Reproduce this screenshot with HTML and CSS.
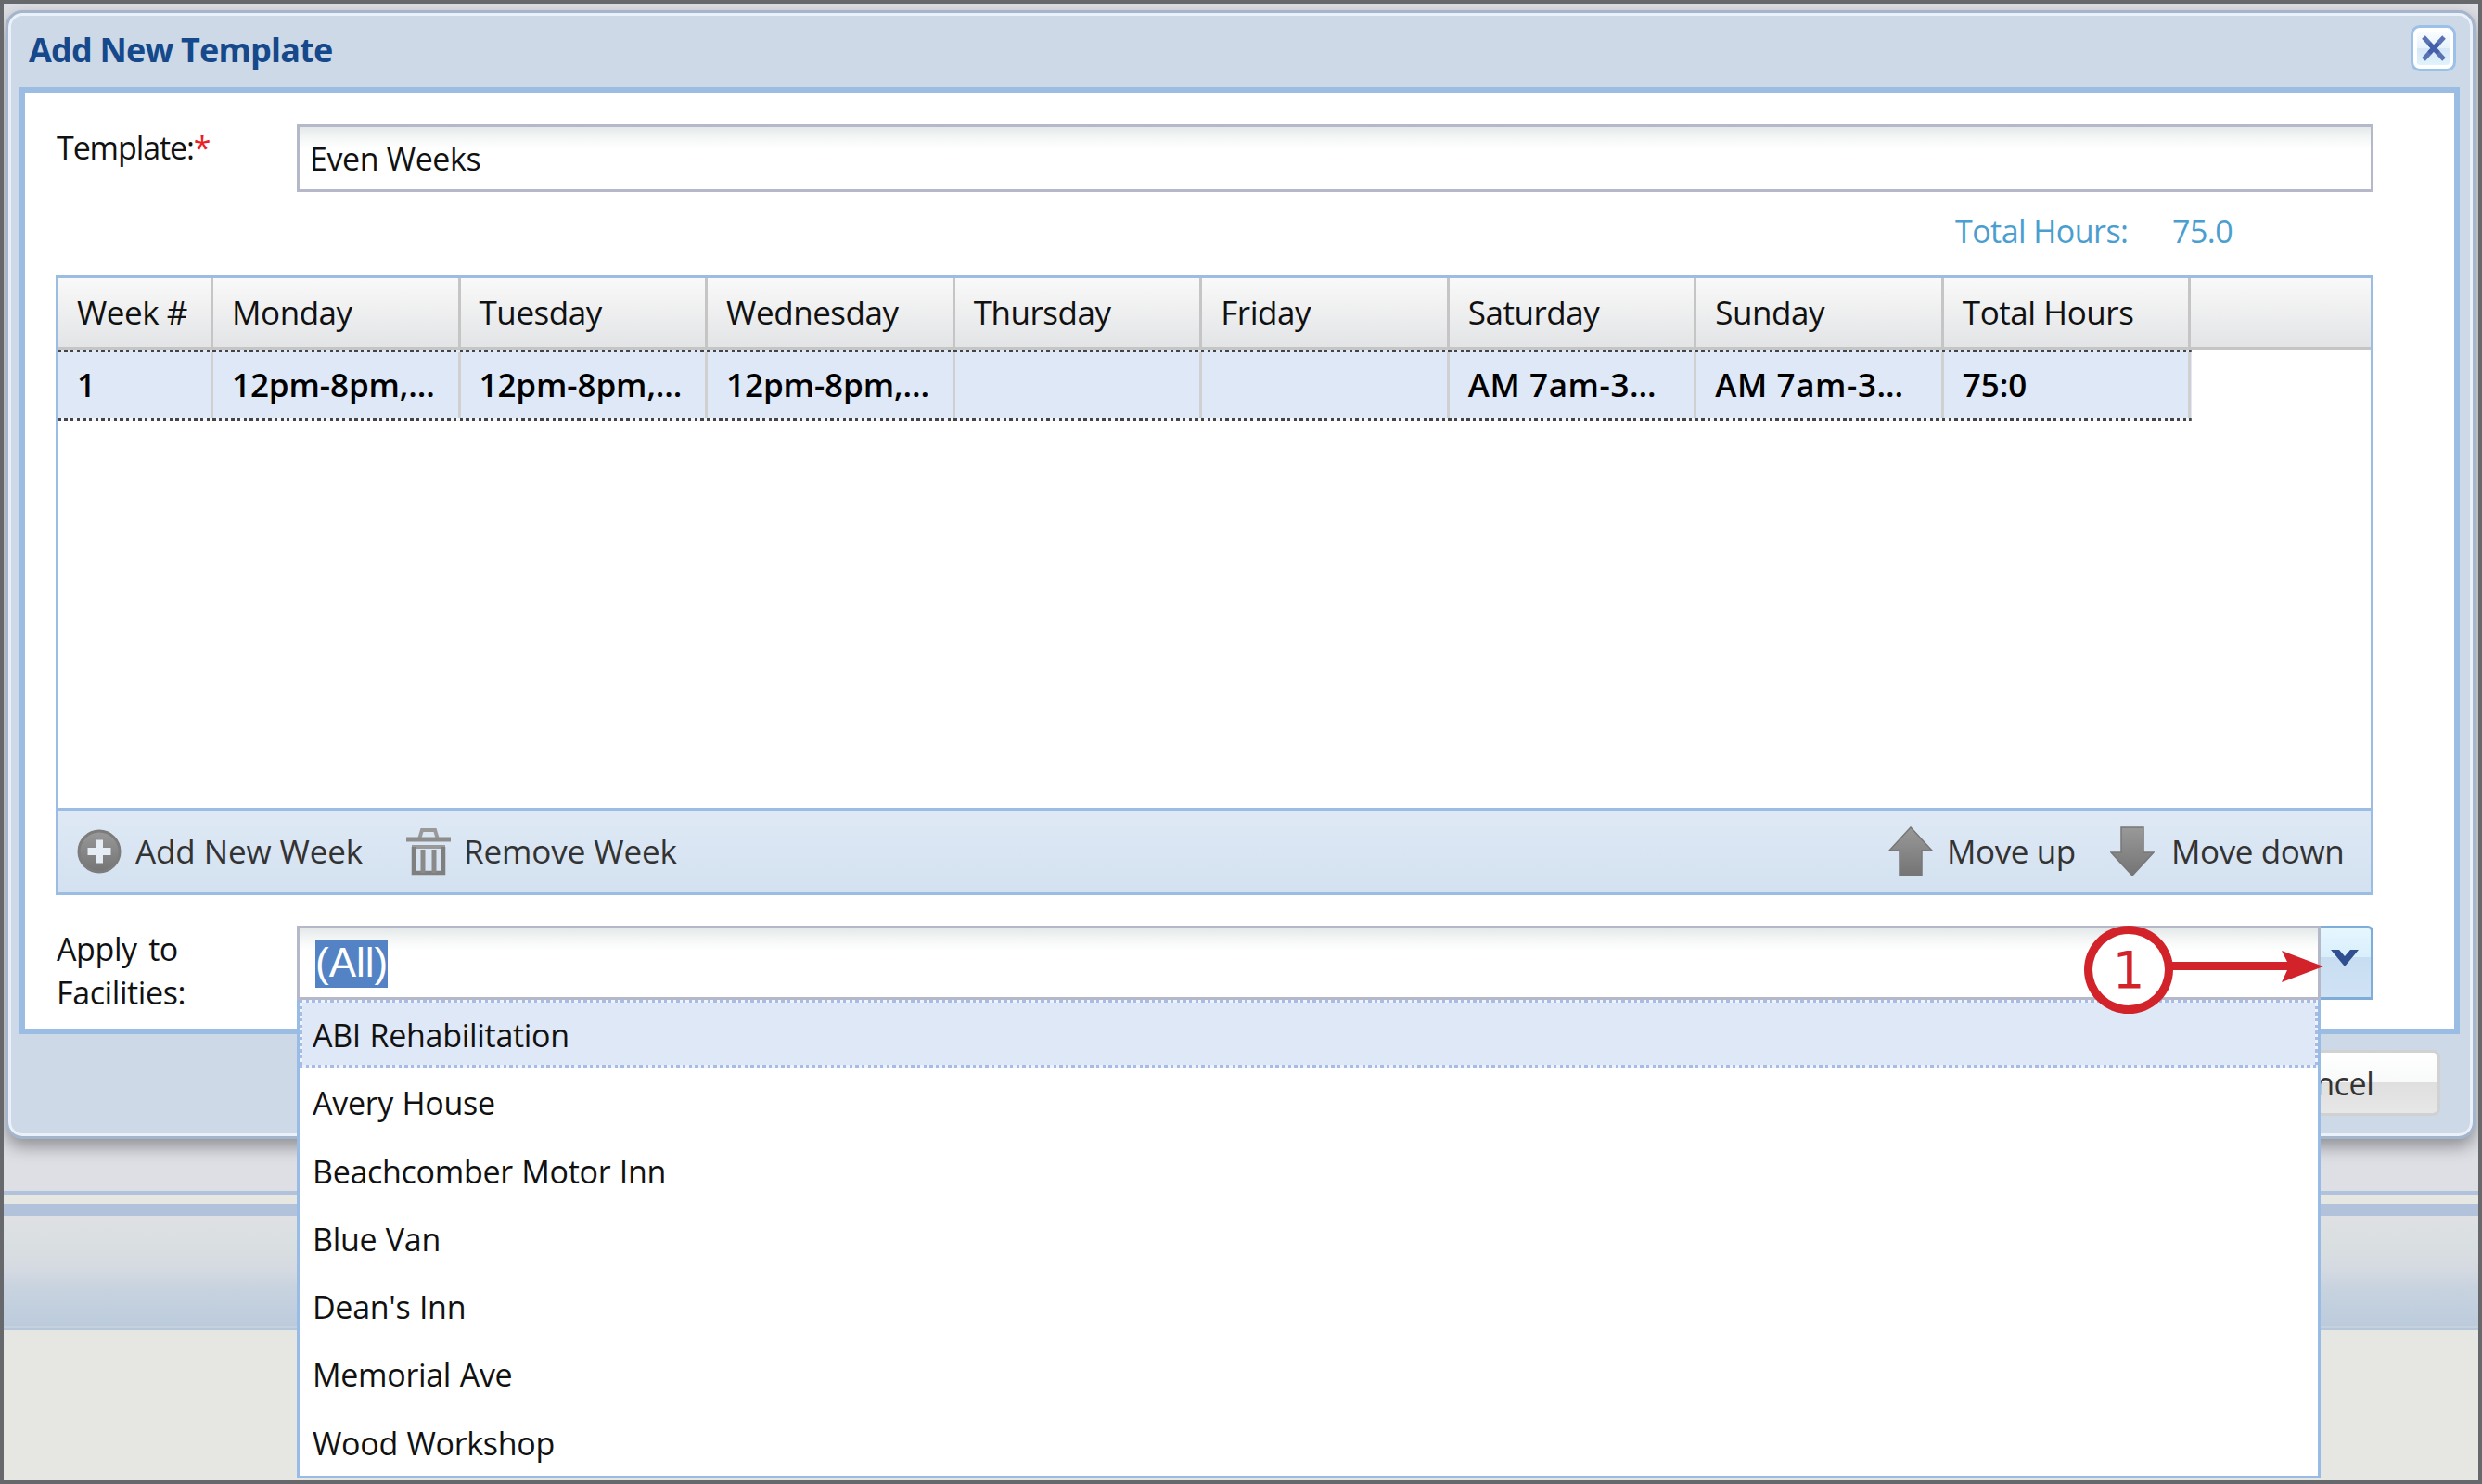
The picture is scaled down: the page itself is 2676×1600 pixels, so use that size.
FILE: index.html
```html
<!DOCTYPE html>
<html lang="en">
<head>
<meta charset="utf-8">
<title>Add New Template</title>
<link rel="stylesheet" href="styles.css">
</head>
<body>
<main class="page">
  <section class="window">
    <header class="window-header">
      <h1 class="window-title">Add New Template</h1>
      <button class="close" aria-label="Close">
        <svg viewBox="0 0 30 30" width="30" height="30"><path d="M4 3L26 27M26 3L4 27" stroke="#5a72b4" stroke-width="5" fill="none"/><path d="M10 10L20 20M20 10L10 20" stroke="#4460aa" stroke-width="5" fill="none"/></svg>
      </button>
    </header>

    <div class="window-body">
      <div class="field template-field">
        <label class="label">Template:<span class="required">*</span></label>
        <div class="input">Even Weeks</div>
      </div>

      <div class="summary">
        <span class="summary-label">Total Hours:</span>
        <span class="summary-value">75.0</span>
      </div>

      <div class="grid">
        <div class="row head">
          <div class="cell">Week #</div>
          <div class="cell">Monday</div>
          <div class="cell">Tuesday</div>
          <div class="cell">Wednesday</div>
          <div class="cell">Thursday</div>
          <div class="cell">Friday</div>
          <div class="cell">Saturday</div>
          <div class="cell">Sunday</div>
          <div class="cell">Total Hours</div>
        </div>
        <div class="row record">
          <div class="cell">1</div>
          <div class="cell">12pm-8pm,…</div>
          <div class="cell">12pm-8pm,…</div>
          <div class="cell">12pm-8pm,…</div>
          <div class="cell"></div>
          <div class="cell"></div>
          <div class="cell weekend">AM 7am-3…</div>
          <div class="cell weekend">AM 7am-3…</div>
          <div class="cell">75:0</div>
        </div>
        <div class="grid-space"></div>
        <div class="toolbar">
          <svg class="icon-add" viewBox="0 0 48 48" width="48" height="48">
            <defs><linearGradient id="grey" x1="0" y1="0" x2="0" y2="1"><stop offset="0" stop-color="#999"/><stop offset="1" stop-color="#747474"/></linearGradient></defs>
            <circle cx="24" cy="24" r="22" fill="url(#grey)" stroke="#7c7c7c" stroke-width="3"/>
            <path d="M20 11.500h8v8.500h8.500v8h-8.500v8.500h-8v-8.500h-8.500v-8h8.500z" fill="#e6edf5"/>
          </svg>
          <span class="tool-text add-text">Add New Week</span>
          <svg class="icon-trash" viewBox="0 0 52 52" width="52" height="52">
            <path d="M16 13L19 3H33L36 13" fill="none" stroke="#999" stroke-width="4"/>
            <path d="M2 10.500H50V15.500H2z" fill="#8d8d8d"/>
            <path d="M8 21H44" stroke="#999" stroke-width="4"/>
            <path d="M10 21V49H42V21" fill="none" stroke="#7f7f7f" stroke-width="4.500"/>
            <path d="M20 24V49M32 24V49" stroke="#8a8a8a" stroke-width="5"/>
          </svg>
          <span class="tool-text remove-text">Remove Week</span>
          <svg class="icon-up" viewBox="0 0 48 54" width="48" height="54"><path d="M24 1L47 26H36V53H12V26H1z" fill="url(#grey)" stroke="#777" stroke-width="1.500"/></svg>
          <span class="tool-text up-text">Move up</span>
          <svg class="icon-down" viewBox="0 0 48 54" width="48" height="54"><path d="M24 53L47 28H36V1H12V28H1z" fill="url(#grey)" stroke="#777" stroke-width="1.500"/></svg>
          <span class="tool-text down-text">Move down</span>
        </div>
      </div>

      <div class="field facility-field">
        <label class="label">Apply to<br>Facilities:</label>
        <div class="combo">
          <div class="combo-input"><span class="selection">(All)</span></div>
          <button class="trigger" aria-label="Open list">
            <svg viewBox="0 0 30 18" width="30" height="18"><path d="M0 0H9L15 7L21 0H30L15 18z" fill="#2f4f90"/></svg>
          </button>
          <ul class="menu">
            <li class="option active">ABI Rehabilitation</li>
            <li class="option">Avery House</li>
            <li class="option">Beachcomber Motor Inn</li>
            <li class="option">Blue Van</li>
            <li class="option">Dean's Inn</li>
            <li class="option">Memorial Ave</li>
            <li class="option">Wood Workshop</li>
          </ul>
          <div class="callout">
            <span class="callout-number">1</span>
            <svg class="callout-arrow" viewBox="0 0 168 34" width="168" height="34"><path d="M0 12H128L122 0L167 17L122 34L128 21H0z" fill="#d2232a"/></svg>
          </div>
        </div>
      </div>
    </div>

    <footer class="window-footer">
      <button class="cancel">Cancel</button>
    </footer>
  </section>
</main>
</body>
</html>
```
FILE: styles.css
```css
* {
  box-sizing: border-box;
}

body {
  margin: 0;
  font-family: "Open Sans", "Noto Sans", sans-serif;
  color: #111;
}

button {
  padding: 0;
  font: inherit;
}

.page {
  display: flex;
  align-items: flex-start;
  width: 2676px;
  height: 1600px;
  padding: 7px 3px 0 2px;
  border: 4px solid #67686c;
  overflow: hidden;
  background: linear-gradient(
    #dedfe5 0 1280px,
    #b1c3dc 1280px 1284px,
    #e6e6e3 1284px 1294px,
    #b1c2da 1294px 1307px,
    #dfe0e3 1307px,
    #d9dfe0 1338px,
    #d5dae2 1364px,
    #c8d3df 1384px,
    #bccbdc 1426px,
    #c5d1de 1426px 1428px,
    #b6c7da 1428px 1430px,
    #e6e6e3 1430px
  );
}

.window {
  display: flex;
  flex-direction: column;
  width: 2663px;
  height: 1217px;
  border: 3px solid #a4b5cc;
  border-radius: 18px;
  background: #cdd9e7;
  box-shadow: inset 0 0 0 3px #ebf1fa, 0 8px 18px rgba(0, 0, 0, 0.36);
}

.window-header {
  display: flex;
  flex: 0 0 80px;
  justify-content: space-between;
  align-items: flex-start;
  padding: 13px 18px 0 22px;
}

.window-title {
  margin: 0;
  font-size: 36px;
  line-height: 54px;
  font-weight: 700;
  letter-spacing: -0.8px;
  color: #15498b;
}

.close {
  display: flex;
  align-items: center;
  justify-content: center;
  width: 49px;
  height: 50px;
  border: 3px solid #9bc0ea;
  border-radius: 10px;
  background: linear-gradient(#fff, #e6f2fc 50%, #d5e7f7 50%, #e3f5fd);
  box-shadow: inset 0 0 0 4px #fff;
}

.window-body {
  flex: 0 0 1021px;
  margin: 0 14px 0 12px;
  padding: 34px 87px 0 33px;
  border: 6px solid #9bbde4;
  background: #fff;
}

.field {
  display: flex;
  align-items: flex-start;
}

.label {
  flex: 0 0 260px;
  padding-left: 1px;
  font-size: 34px;
  line-height: 47px;
  letter-spacing: -0.4px;
  word-spacing: 4px;
}

.template-field .label {
  padding-top: 2px;
  letter-spacing: -1.1px;
}

.required {
  color: #ee1c25;
}

.input,
.combo-input {
  flex: 1;
  border: 3px solid #b5b8c8;
  background: linear-gradient(#e3e8e9, #f3f5f5 10px, #fff 24px);
}

.input {
  height: 73px;
  padding-left: 11px;
  font-size: 34px;
  line-height: 68px;
  letter-spacing: -0.4px;
}

.summary {
  display: flex;
  justify-content: flex-end;
  height: 90px;
  font-size: 34px;
  line-height: 85px;
  letter-spacing: -0.55px;
  color: #4b9ed0;
}

.summary-label {
  width: 234px;
}

.summary-value {
  width: 217px;
}

.grid {
  display: flex;
  flex-direction: column;
  height: 668px;
  border: 3px solid #9bbde4;
  font-size: 35px;
}

.row {
  display: grid;
  grid-template-columns: 167px repeat(8, 266.55px);
}

.head {
  height: 77px;
  border-bottom: 3px solid #c5c5c5;
  background: linear-gradient(#f9f9f9, #e3e4e6);
  line-height: 74px;
  letter-spacing: -0.45px;
}

.cell {
  padding-left: 20px;
  border-right: 3px solid #c5c5c5;
  white-space: nowrap;
  overflow: hidden;
}

.record {
  width: 2299.5px;
  height: 77px;
  padding: 3px 0;
  background:
    repeating-linear-gradient(90deg, #444 0 3.33px, #dfe8f6 3.33px 6.66px) top / 100% 3px no-repeat,
    repeating-linear-gradient(90deg, #444 0 3.33px, #f2f5fa 3.33px 6.66px) bottom / 100% 3px no-repeat,
    #dee8f6;
  line-height: 70px;
  font-weight: 600;
  letter-spacing: -0.1px;
  color: #000;
}

.record .cell {
  border-right-color: #d0d0d0;
}

.record .weekend {
  letter-spacing: 0.6px;
}

.grid-space {
  flex: 1;
}

.toolbar {
  display: flex;
  align-items: center;
  height: 91px;
  padding: 0 30px 0 20px;
  border-top: 3px solid #9bbde4;
  background: linear-gradient(#dfe9f5, #d3e1f0);
  color: #333;
  letter-spacing: -0.4px;
}

.tool-text {
  line-height: 88px;
  white-space: nowrap;
}

.add-text {
  width: 305px;
  padding-left: 15px;
  letter-spacing: -0.1px;
}

.remove-text {
  padding-left: 12px;
  letter-spacing: -0.1px;
}

.icon-up {
  margin-left: auto;
}

.up-text {
  width: 191px;
  padding-left: 15px;
}

.down-text {
  width: 203px;
  padding-left: 18px;
}

.facility-field {
  padding-top: 33px;
}

.facility-field .label {
  padding-top: 2px;
}

.combo {
  position: relative;
  display: flex;
  flex: 1;
  height: 80px;
}

.combo-input {
  padding: 12px 0 0 17px;
}

.selection {
  display: inline-block;
  height: 52px;
  background: #5383c4;
  color: #fff;
  font: 44px/50px "Liberation Sans", Arial, sans-serif;
}

.trigger {
  display: flex;
  justify-content: center;
  width: 57px;
  padding: 23px 2px 0 0;
  border: solid #7eadd9;
  border-width: 3px 3px 3px 0;
  border-radius: 0 6px 0 0;
  background: linear-gradient(#e6f6fe, #d8effc 42%, #c9ddf2 42%, #d0e3f5);
}

.menu {
  position: absolute;
  top: 80px;
  left: 0;
  width: 2182px;
  height: 516px;
  margin: 0;
  padding: 0;
  border: 3px solid #99bce6;
  border-top: 0;
  background: #fff;
  list-style: none;
  font-size: 34px;
  letter-spacing: -0.3px;
  word-spacing: 1px;
}

.option {
  height: 73.3px;
  padding-left: 14px;
  line-height: 77.5px;
}

.active {
  background:
    repeating-linear-gradient(90deg, #a6bce6 0 3.33px, #eef3fb 3.33px 6.66px) top / 100% 3px no-repeat,
    repeating-linear-gradient(90deg, #a6bce6 0 3.33px, #eef3fb 3.33px 6.66px) bottom / 100% 3px no-repeat,
    repeating-linear-gradient(#a6bce6 0 3.33px, #eef3fb 3.33px 6.66px) left / 3px 100% no-repeat,
    repeating-linear-gradient(#a6bce6 0 3.33px, #eef3fb 3.33px 6.66px) right / 3px 100% no-repeat,
    #dfe8f6;
}

.callout {
  position: absolute;
  top: 0;
  left: 1927px;
  display: flex;
  align-items: flex-start;
}

.callout-number {
  width: 96px;
  height: 95px;
  border: 9px solid #d2232a;
  border-radius: 50%;
  background: #fff;
  color: #d2232a;
  font: 55px/79px "DejaVu Sans", sans-serif;
  text-align: center;
}

.callout-arrow {
  margin: 27px 0 0 -5px;
}

.window-footer {
  display: flex;
  flex: 1;
  justify-content: flex-end;
  align-items: flex-start;
  padding: 17px 35px 0 0;
}

.cancel {
  width: 248px;
  height: 71px;
  padding: 2px 0 0 2px;
  border: 3px solid #d1d1d1;
  border-radius: 8px;
  background: linear-gradient(#fff, #f8f9f9 50%, #dfdfdf 50%, #e7e7e7);
  color: #333;
  font-size: 34px;
  line-height: 63px;
  letter-spacing: -0.4px;
}
```
